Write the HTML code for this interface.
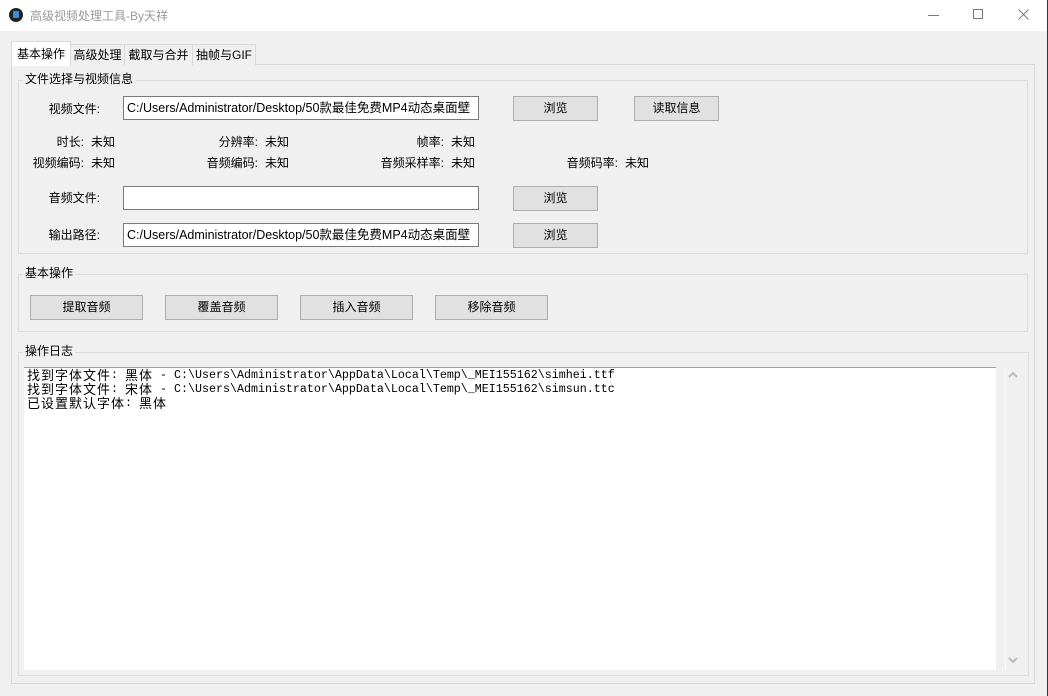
<!DOCTYPE html>
<html><head><meta charset="utf-8"><style>
*{margin:0;padding:0;box-sizing:border-box}
body{width:1048px;height:696px;background:#f0f0f0;font-family:"Liberation Sans","Noto Sans CJK SC",sans-serif;font-size:12px;color:#000;position:relative;overflow:hidden}
.a{position:absolute}
.title{left:0;top:0;width:1048px;height:31px;background:#fff}
.edge{right:0;top:0;width:1px;height:696px;background:#2b3a44}
.tab{border:1px solid #d9d9d9;border-bottom:none;background:#f0f0f0;height:21px;top:44px;line-height:20px;text-align:center;font-size:12px}
.panel{left:11px;top:64px;width:1024px;height:620px;border:1px solid #d9d9d9}
.gb{border:1px solid #dcdcdc}
.gt{background:#f0f0f0;padding:0 2px;line-height:14px}
.inp{background:#fff;border:1px solid #7a7a7a;height:24px;line-height:22px;padding-left:3px;font-size:12.5px;white-space:nowrap;overflow:hidden}
.btn{background:#e1e1e1;border:1px solid #adadad;height:25px;line-height:23px;text-align:center}
.lbl{text-align:right;line-height:14px}
.log{font-family:"Liberation Mono","Noto Sans CJK SC",monospace;font-size:11.67px;white-space:pre}
.log div{height:14px;line-height:14px;overflow:visible}
.log b{font-weight:normal;font-size:13px;letter-spacing:1px;font-family:"Noto Sans CJK SC",sans-serif;line-height:14px;display:inline-block;height:14px;vertical-align:top}
</style></head><body>
<div class="a title"></div>
<div class="a" style="left:9px;top:8px;width:14px;height:14px;border-radius:50%;background:#222"></div>
<div class="a" style="left:13px;top:11px;width:6px;height:7px;background:#3b8ed8;border-radius:1px"></div>
<div class="a" style="left:30px;top:8px;color:#999;font-size:12px;line-height:16px">高级视频处理工具-By天祥</div>
<div class="a" style="left:928px;top:15px;width:11px;height:1px;background:#777"></div>
<div class="a" style="left:973px;top:9px;width:10px;height:10px;border:1px solid #777"></div>
<svg class="a" style="left:1018px;top:9px" width="11" height="11"><path d="M0.5 0.5L10.5 10.5M10.5 0.5L0.5 10.5" stroke="#777" stroke-width="1"/></svg>
<div class="a edge"></div>

<div class="a panel"></div>
<div class="a tab" style="left:70px;width:55px">高级处理</div>
<div class="a tab" style="left:124px;width:69px">截取与合并</div>
<div class="a tab" style="left:192px;width:64px">抽帧与GIF</div>
<div class="a tab" style="left:11px;top:41px;width:60px;height:25px;background:#fff;line-height:24px">基本操作</div>

<div class="a gb" style="left:18px;top:80px;width:1010px;height:174px"></div>
<div class="a gt" style="left:23px;top:72px">文件选择与视频信息</div>
<div class="a lbl" style="left:30px;top:102px;width:70px">视频文件:</div>
<div class="a inp" style="left:123px;top:96px;width:356px">C:/Users/Administrator/Desktop/50款最佳免费MP4动态桌面壁</div>
<div class="a btn" style="left:513px;top:96px;width:85px">浏览</div>
<div class="a btn" style="left:634px;top:96px;width:85px">读取信息</div>

<div class="a lbl" style="left:20px;top:135px;width:64px">时长:</div><div class="a" style="left:91px;top:135px;line-height:14px">未知</div>
<div class="a lbl" style="left:180px;top:135px;width:78px">分辨率:</div><div class="a" style="left:265px;top:135px;line-height:14px">未知</div>
<div class="a lbl" style="left:360px;top:135px;width:84px">帧率:</div><div class="a" style="left:451px;top:135px;line-height:14px">未知</div>
<div class="a lbl" style="left:20px;top:156px;width:64px">视频编码:</div><div class="a" style="left:91px;top:156px;line-height:14px">未知</div>
<div class="a lbl" style="left:180px;top:156px;width:78px">音频编码:</div><div class="a" style="left:265px;top:156px;line-height:14px">未知</div>
<div class="a lbl" style="left:360px;top:156px;width:84px">音频采样率:</div><div class="a" style="left:451px;top:156px;line-height:14px">未知</div>
<div class="a lbl" style="left:530px;top:156px;width:88px">音频码率:</div><div class="a" style="left:625px;top:156px;line-height:14px">未知</div>

<div class="a lbl" style="left:30px;top:191px;width:70px">音频文件:</div>
<div class="a inp" style="left:123px;top:186px;width:356px"></div>
<div class="a btn" style="left:513px;top:186px;width:85px">浏览</div>
<div class="a lbl" style="left:30px;top:228px;width:70px">输出路径:</div>
<div class="a inp" style="left:123px;top:223px;width:356px">C:/Users/Administrator/Desktop/50款最佳免费MP4动态桌面壁</div>
<div class="a btn" style="left:513px;top:223px;width:85px">浏览</div>

<div class="a gb" style="left:18px;top:274px;width:1010px;height:58px"></div>
<div class="a gt" style="left:23px;top:266px">基本操作</div>
<div class="a btn" style="left:30px;top:295px;width:113px">提取音频</div>
<div class="a btn" style="left:165px;top:295px;width:113px">覆盖音频</div>
<div class="a btn" style="left:300px;top:295px;width:113px">插入音频</div>
<div class="a btn" style="left:435px;top:295px;width:113px">移除音频</div>

<div class="a gb" style="left:18px;top:352px;width:1011px;height:324px"></div>
<div class="a gt" style="left:23px;top:344px">操作日志</div>
<div class="a" style="left:24px;top:367px;width:972px;height:303px;background:#fff;border-top:1px solid #a0a0a0"></div>
<div class="a" style="left:1005px;top:367px;width:1px;height:303px;background:#fff"></div>
<svg class="a" style="left:1008px;top:371px" width="10" height="8"><path d="M1 6L5 2L9 6" stroke="#bbb" stroke-width="2" fill="none"/></svg>
<svg class="a" style="left:1008px;top:656px" width="10" height="8"><path d="M1 2L5 6L9 2" stroke="#bbb" stroke-width="2" fill="none"/></svg>
<div class="a log" style="left:27px;top:368px"><div><b>找到字体文件</b>: <b>黑体</b> - C:\Users\Administrator\AppData\Local\Temp\_MEI155162\simhei.ttf</div><div><b>找到字体文件</b>: <b>宋体</b> - C:\Users\Administrator\AppData\Local\Temp\_MEI155162\simsun.ttc</div><div><b>已设置默认字体</b>: <b>黑体</b></div></div>
</body></html>
